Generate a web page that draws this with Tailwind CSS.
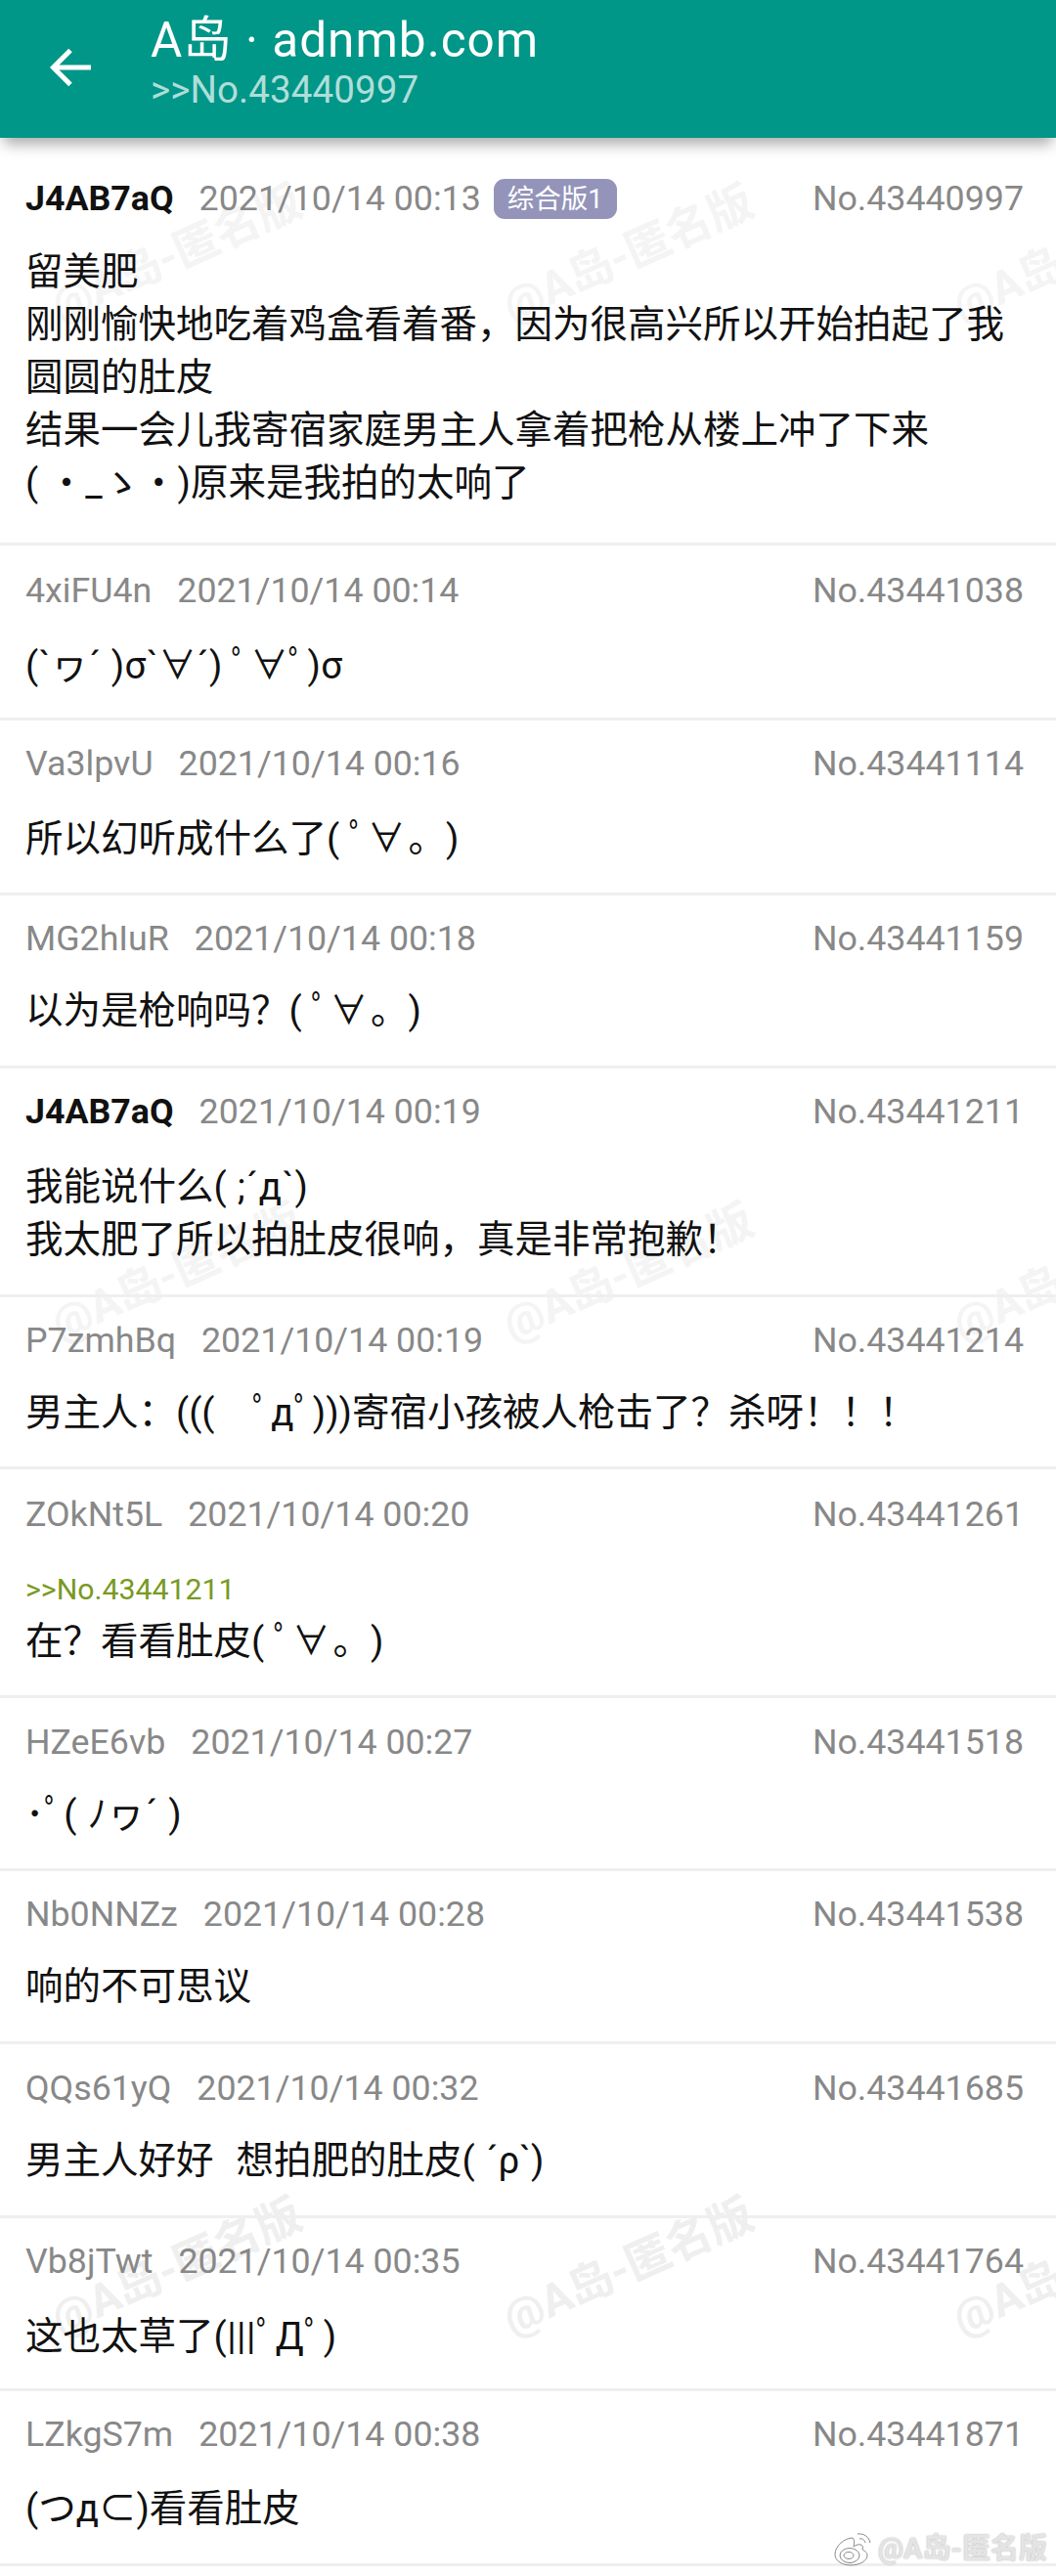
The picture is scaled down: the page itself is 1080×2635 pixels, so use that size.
<!doctype html>
<html><head><meta charset="utf-8"><script src="https://cdn.jsdelivr.net/npm/@tailwindcss/browser@4"></script></head>
<body class="bg-white">
<div class="relative w-[1080px] h-[2635px] overflow-hidden bg-white text-[#111] font-['Roboto','Noto_Sans_CJK_SC',sans-serif]">
<div class="absolute left-[55px] top-[290px] origin-left -rotate-[24deg] whitespace-nowrap text-[46px] leading-[50px] font-bold text-[#f4f4f4]">@A岛-匿名版</div>
<div class="absolute left-[517px] top-[290px] origin-left -rotate-[24deg] whitespace-nowrap text-[46px] leading-[50px] font-bold text-[#f4f4f4]">@A岛-匿名版</div>
<div class="absolute left-[977px] top-[290px] origin-left -rotate-[24deg] whitespace-nowrap text-[46px] leading-[50px] font-bold text-[#f4f4f4]">@A岛-匿名版</div>
<div class="absolute left-[55px] top-[1332px] origin-left -rotate-[24deg] whitespace-nowrap text-[46px] leading-[50px] font-bold text-[#f4f4f4]">@A岛-匿名版</div>
<div class="absolute left-[517px] top-[1332px] origin-left -rotate-[24deg] whitespace-nowrap text-[46px] leading-[50px] font-bold text-[#f4f4f4]">@A岛-匿名版</div>
<div class="absolute left-[977px] top-[1332px] origin-left -rotate-[24deg] whitespace-nowrap text-[46px] leading-[50px] font-bold text-[#f4f4f4]">@A岛-匿名版</div>
<div class="absolute left-[55px] top-[2349px] origin-left -rotate-[24deg] whitespace-nowrap text-[46px] leading-[50px] font-bold text-[#efefef]">@A岛-匿名版</div>
<div class="absolute left-[517px] top-[2349px] origin-left -rotate-[24deg] whitespace-nowrap text-[46px] leading-[50px] font-bold text-[#efefef]">@A岛-匿名版</div>
<div class="absolute left-[977px] top-[2349px] origin-left -rotate-[24deg] whitespace-nowrap text-[46px] leading-[50px] font-bold text-[#efefef]">@A岛-匿名版</div>
<div class="relative">
<header class="h-[141px] bg-[#009688] shadow-[0_10px_14px_-4px_rgba(0,0,0,0.35)] flex items-start relative z-10">
<svg class="ml-[50px] mt-[48px] w-[44px] h-[42px] shrink-0" viewBox="0 0 44 42" fill="none" stroke="white" stroke-width="5"><path d="M43 21H4M22 3.500 4.500 21l17.500 17.500"/></svg>
<div class="ml-[60px] pt-[13px]">
<div class="text-[49.5px] leading-[56px] text-white whitespace-pre tracking-[1px]">A岛 · adnmb.com</div>
<div class="text-[38.500px] leading-[46px] text-white/70 tracking-[0.1px]">&gt;&gt;No.43440997</div>
</div>
</header>
<main>
<article class="h-[417px] pt-[41px] border-b-[3px] border-[#f1eeef]">
<div class="pl-[26px] pr-[33px] flex items-center text-[35.750px] leading-[42px] text-[#888]"><b class="font-bold text-[#111]">J4AB7aQ</b><span class="ml-[26px]">2021/10/14 00:13</span><span class="ml-[13px] px-[14px] h-[41px] leading-[41px] rounded-[11px] bg-[#9494ba] text-white text-[27.500px]">综合版1</span><span class="ml-auto">No.43440997</span></div>
<div class="px-[26px] mt-[27px] text-[38.500px] leading-[54px]">留美肥<br>刚刚愉快地吃着鸡盒看着番，因为很高兴所以开始拍起了我<br>圆圆的肚皮<br>结果一会儿我寄宿家庭男主人拿着把枪从楼上冲了下来<br>( ・_ゝ・)原来是我拍的太响了</div>
</article>
<article class="h-[179px] pt-[25px] border-b-[3px] border-[#f1eeef]">
<div class="pl-[26px] pr-[33px] flex items-center text-[35.750px] leading-[42px] text-[#888]"><span>4xiFU4n</span><span class="ml-[26px]">2021/10/14 00:14</span><span class="ml-auto">No.43441038</span></div>
<div class="px-[26px] mt-[29px] text-[38.500px] leading-[54px] tracking-[0.5px]">(`ヮ´ )σ`∀´) ﾟ∀ﾟ)σ</div>
</article>
<article class="h-[179px] pt-[23px] border-b-[3px] border-[#f1eeef]">
<div class="pl-[26px] pr-[33px] flex items-center text-[35.750px] leading-[42px] text-[#888]"><span>Va3lpvU</span><span class="ml-[26px]">2021/10/14 00:16</span><span class="ml-auto">No.43441114</span></div>
<div class="px-[26px] mt-[29px] text-[38.500px] leading-[54px]">所以幻听成什么了( ﾟ∀<span class="inline-block ml-[3px]">。</span>)</div>
</article>
<article class="h-[177px] pt-[23px] border-b-[3px] border-[#f1eeef]">
<div class="pl-[26px] pr-[33px] flex items-center text-[35.750px] leading-[42px] text-[#888]"><span>MG2hIuR</span><span class="ml-[26px]">2021/10/14 00:18</span><span class="ml-auto">No.43441159</span></div>
<div class="px-[26px] mt-[26px] text-[38.500px] leading-[54px]">以为是枪响吗？( ﾟ∀<span class="inline-block ml-[3px]">。</span>)</div>
</article>
<article class="h-[234px] pt-[23px] border-b-[3px] border-[#f1eeef]">
<div class="pl-[26px] pr-[33px] flex items-center text-[35.750px] leading-[42px] text-[#888]"><b class="font-bold text-[#111]">J4AB7aQ</b><span class="ml-[26px]">2021/10/14 00:19</span><span class="ml-auto">No.43441211</span></div>
<div class="px-[26px] mt-[29px] text-[38.500px] leading-[54px]">我能说什么<span class="tracking-[0.8px]">( ;´д`)</span><br>我太肥了所以拍肚皮很响，真是非常抱歉！</div>
</article>
<article class="h-[176px] pt-[23px] border-b-[3px] border-[#f1eeef]">
<div class="pl-[26px] pr-[33px] flex items-center text-[35.750px] leading-[42px] text-[#888]"><span>P7zmhBq</span><span class="ml-[26px]">2021/10/14 00:19</span><span class="ml-auto">No.43441214</span></div>
<div class="px-[26px] mt-[26px] text-[38.500px] leading-[54px]">男主人：(((　ﾟдﾟ)))寄宿小孩被人枪击了？杀呀！！！</div>
</article>
<article class="h-[234px] pt-[25px] border-b-[3px] border-[#f1eeef]">
<div class="pl-[26px] pr-[33px] flex items-center text-[35.750px] leading-[42px] text-[#888]"><span>ZOkNt5L</span><span class="ml-[26px]">2021/10/14 00:20</span><span class="ml-auto">No.43441261</span></div>
<div class="px-[26px] mt-[36px] text-[30.250px] leading-[40px] text-[#789922]">&gt;&gt;No.43441211</div>
<div class="px-[26px] mt-[6px] text-[38.500px] leading-[54px]">在？看看肚皮( ﾟ∀<span class="inline-block ml-[3px]">。</span>)</div>
</article>
<article class="h-[177px] pt-[24px] border-b-[3px] border-[#f1eeef]">
<div class="pl-[26px] pr-[33px] flex items-center text-[35.750px] leading-[42px] text-[#888]"><span>HZeE6vb</span><span class="ml-[26px]">2021/10/14 00:27</span><span class="ml-auto">No.43441518</span></div>
<div class="px-[26px] mt-[26px] text-[38.500px] leading-[54px] tracking-[0.8px]">･ﾟ( ﾉヮ´ )</div>
</article>
<article class="h-[177px] pt-[23px] border-b-[3px] border-[#f1eeef]">
<div class="pl-[26px] pr-[33px] flex items-center text-[35.750px] leading-[42px] text-[#888]"><span>Nb0NNZz</span><span class="ml-[26px]">2021/10/14 00:28</span><span class="ml-auto">No.43441538</span></div>
<div class="px-[26px] mt-[26px] text-[38.500px] leading-[54px]">响的不可思议</div>
</article>
<article class="h-[178px] pt-[24px] border-b-[3px] border-[#f1eeef]">
<div class="pl-[26px] pr-[33px] flex items-center text-[35.750px] leading-[42px] text-[#888]"><span>QQs61yQ</span><span class="ml-[26px]">2021/10/14 00:32</span><span class="ml-auto">No.43441685</span></div>
<div class="px-[26px] mt-[26px] text-[38.500px] leading-[54px] whitespace-pre [word-spacing:2px]">男主人好好  想拍肥的肚皮( ´ρ`)</div>
</article>
<article class="h-[177px] pt-[23px] border-b-[3px] border-[#f1eeef]">
<div class="pl-[26px] pr-[33px] flex items-center text-[35.750px] leading-[42px] text-[#888]"><span>Vb8jTwt</span><span class="ml-[26px]">2021/10/14 00:35</span><span class="ml-auto">No.43441764</span></div>
<div class="px-[26px] mt-[29px] text-[38.500px] leading-[54px]">这也太草了<span class="tracking-[0.5px]">(|||ﾟДﾟ)</span></div>
</article>
<article class="h-[179px] pt-[23px] border-b-[3px] border-[#f1eeef]">
<div class="pl-[26px] pr-[33px] flex items-center text-[35.750px] leading-[42px] text-[#888]"><span>LZkgS7m</span><span class="ml-[26px]">2021/10/14 00:38</span><span class="ml-auto">No.43441871</span></div>
<div class="px-[26px] mt-[28px] text-[38.500px] leading-[54px]">(つд⊂)看看肚皮</div>
</article>
</main>
</div>
<div class="absolute left-[852px] top-[2588px] flex items-center">
<svg class="w-[42px] h-[37px]" viewBox="0 0 42 37" fill="none" stroke="#8a8a8a" stroke-width="1"><path d="M20 8C12 8 2 16 2 25c0 7 8 11 16 11 10 0 17-5 17-10 0-4-4-5-5-6 1-3 0-5-2-5-2-1-6 1-7 2 1-4 1-7-1-9z"/><ellipse cx="17" cy="26" rx="10" ry="7.500"/><ellipse cx="16" cy="26" rx="5" ry="3.500"/><path d="M25 4c6-1 12 3 13 9M27 9c3-1 5 1 6 4"/></svg>
<span class="ml-[4px] text-[29px] leading-[36px] font-bold whitespace-nowrap text-[#e4e4e4] [text-shadow:0_0_2px_#b0b0b0]">@A岛-匿名版</span>
</div>
</div>
</body></html>
